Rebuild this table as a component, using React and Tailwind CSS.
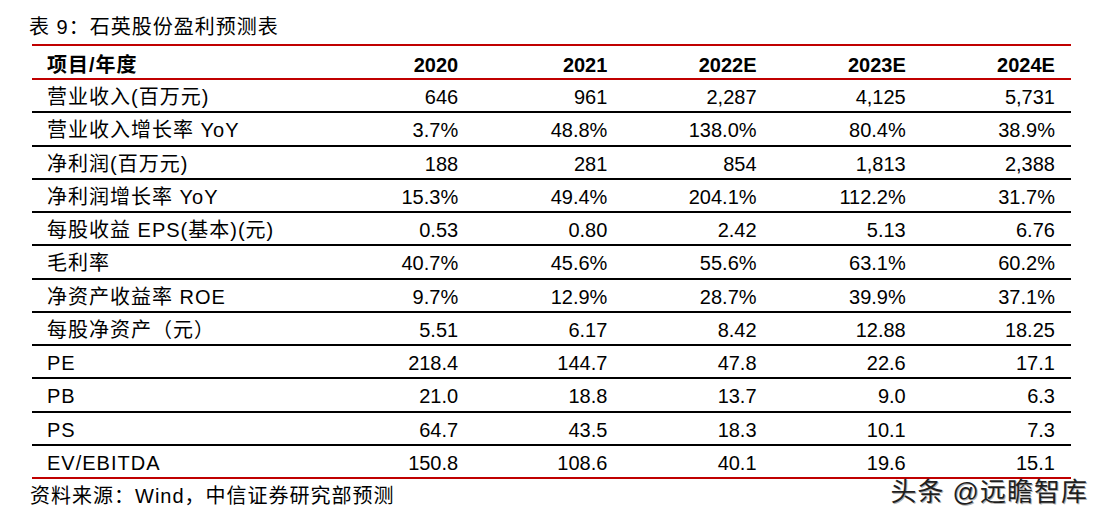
import React from 'react';

const years = ['2020', '2021', '2022E', '2023E', '2024E'];

const rows = [
  ['营业收入(百万元)', '646', '961', '2,287', '4,125', '5,731'],
  ['营业收入增长率 YoY', '3.7%', '48.8%', '138.0%', '80.4%', '38.9%'],
  ['净利润(百万元)', '188', '281', '854', '1,813', '2,388'],
  ['净利润增长率 YoY', '15.3%', '49.4%', '204.1%', '112.2%', '31.7%'],
  ['每股收益 EPS(基本)(元)', '0.53', '0.80', '2.42', '5.13', '6.76'],
  ['毛利率', '40.7%', '45.6%', '55.6%', '63.1%', '60.2%'],
  ['净资产收益率 ROE', '9.7%', '12.9%', '28.7%', '39.9%', '37.1%'],
  ['每股净资产（元）', '5.51', '6.17', '8.42', '12.88', '18.25'],
  ['PE', '218.4', '144.7', '47.8', '22.6', '17.1'],
  ['PB', '21.0', '18.8', '13.7', '9.0', '6.3'],
  ['PS', '64.7', '43.5', '18.3', '10.1', '7.3'],
  ['EV/EBITDA', '150.8', '108.6', '40.1', '19.6', '15.1'],
];

const App = () => {
  return (
    <div className="w-[1104px] h-[524px] overflow-hidden bg-white text-black font-['Liberation_Sans','Noto_Sans_CJK_SC',sans-serif] text-[20px]">
      <div className="h-[44px] pt-[15px] pl-[29px] leading-[24px] tracking-[1px]">表 9：石英股份盈利预测表</div>

      <div className="ml-[32px] w-[1039px]">
        <div className="h-[36px] pt-[5px] grid grid-cols-[291px_repeat(5,149.2px)] items-center border-t-2 border-b-2 border-[#c00000] font-bold leading-[24px]">
          <div className="pl-[15px] tracking-[1px]">项目/年度</div>
          {years.map((y) => (
            <div key={y} className="text-right pr-[14px]">{y}</div>
          ))}
        </div>

        {rows.map((row, i) => (
          <div
            key={row[0]}
            className={`h-[33.25px] pt-[3px] grid grid-cols-[291px_repeat(5,149.2px)] items-center border-b-2 leading-[24px] ${
              i === rows.length - 1 ? 'border-[#c00000]' : 'border-black'
            }`}
          >
            <div className="pl-[15px] tracking-[1px] whitespace-nowrap">{row[0]}</div>
            {row.slice(1).map((v, j) => (
              <div key={j} className="text-right pr-[14px]">{v}</div>
            ))}
          </div>
        ))}
      </div>

      <div className="flex justify-between items-start pl-[30px] pr-[16px]">
        <span className="mt-[5px] leading-[24px] tracking-[1px]">资料来源：Wind，中信证券研究部预测</span>
        <span className="-mt-[2px] leading-[30px] text-[26px] tracking-[1px] text-[#1f1f1f] [text-shadow:1px_1px_0_#b0b0b0]">头条 @远瞻智库</span>
      </div>
    </div>
  );
};

export default App;
